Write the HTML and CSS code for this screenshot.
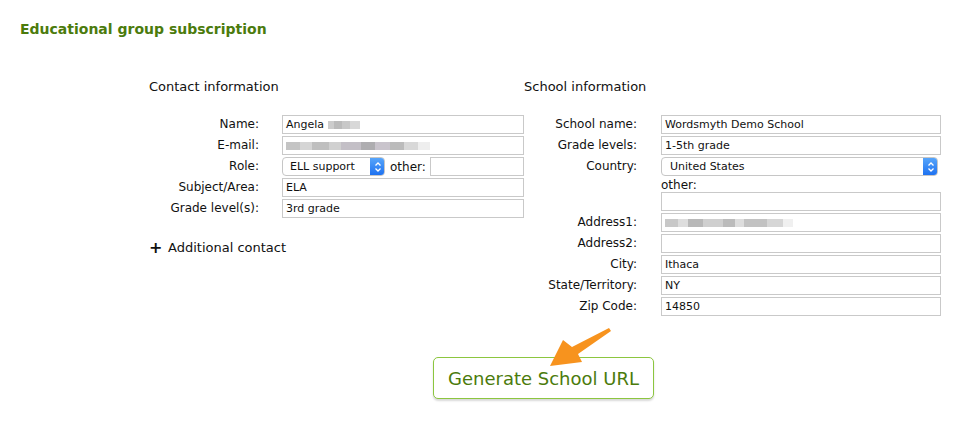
FILE: index.html
```html
<!DOCTYPE html>
<html>
<head>
<meta charset="utf-8">
<link rel="stylesheet" href="styles.css">
</head>
<body>
<div class="page">
  <h1 class="title">Educational group subscription</h1>
  <div class="columns">
    <section class="col col-contact">
      <h2 class="col-head">Contact information</h2>
      <div class="rows">
        <div class="row"><span class="lbl">Name:</span><div class="field">Angela <span class="blur blur-short"></span></div></div>
        <div class="row"><span class="lbl">E-mail:</span><div class="field"><span class="blur blur-long"></span></div></div>
        <div class="row"><span class="lbl">Role:</span>
          <div class="role-line">
            <div class="select select-role"><span class="sel-text">ELL support</span><span class="sel-btn"><svg width="8" height="12" viewBox="0 0 8 12"><path d="M1.5 4.5 L4 2 L6.5 4.5 M1.5 7.5 L4 10 L6.5 7.5" fill="none" stroke="#fff" stroke-width="1.3"/></svg></span></div>
            <span class="other-lbl">other:</span>
            <div class="field field-other"></div>
          </div>
        </div>
        <div class="row"><span class="lbl">Subject/Area:</span><div class="field">ELA</div></div>
        <div class="row"><span class="lbl">Grade level(s):</span><div class="field">3rd grade</div></div>
      </div>
      <div class="add-contact"><span class="plus">+</span>Additional contact</div>
    </section>
    <section class="col col-school">
      <h2 class="col-head">School information</h2>
      <div class="rows rows-school">
        <div class="row"><span class="lbl">School name:</span><div class="field">Wordsmyth Demo School</div></div>
        <div class="row"><span class="lbl">Grade levels:</span><div class="field">1-5th grade</div></div>
        <div class="row row-country"><span class="lbl">Country:</span>
          <div class="country-stack">
            <div class="select select-country"><span class="sel-text">United States</span><span class="sel-btn"><svg width="8" height="12" viewBox="0 0 8 12"><path d="M1.5 4.5 L4 2 L6.5 4.5 M1.5 7.5 L4 10 L6.5 7.5" fill="none" stroke="#fff" stroke-width="1.3"/></svg></span></div>
            <span class="other-under">other:</span>
            <div class="field"></div>
          </div>
        </div>
        <div class="row"><span class="lbl">Address1:</span><div class="field"><span class="blur blur-addr"></span></div></div>
        <div class="row"><span class="lbl">Address2:</span><div class="field"></div></div>
        <div class="row"><span class="lbl">City:</span><div class="field">Ithaca</div></div>
        <div class="row"><span class="lbl">State/Territory:</span><div class="field">NY</div></div>
        <div class="row"><span class="lbl">Zip Code:</span><div class="field">14850</div></div>
      </div>
    </section>
  </div>
  <div class="actions">
    <button class="gen-btn">Generate School URL</button>
    <svg class="arrow" width="70" height="45" viewBox="0 0 70 45">
      <polygon points="0,38 13,12 22,19 59,0 61,3 28,26 32,34" fill="#f7931e"/>
    </svg>
  </div>
</div>
</body>
</html>
```
FILE: styles.css
```css
* { box-sizing: border-box; }
html, body { margin: 0; padding: 0; background: #fff; }
body { font-family: "DejaVu Sans", Verdana, sans-serif; color: #111; width: 966px; height: 422px; overflow: hidden; }
.page { padding: 20px 0 0 20px; }
.title { margin: 0; font-size: 14px; font-weight: bold; color: #4b7b0c; line-height: 18px; }
.columns { display: flex; margin-top: 41px; padding-left: 129px; }
.col-head { margin: 0; font-size: 13px; font-weight: normal; line-height: 16px; height: 18px; }
.col-contact { width: 375px; }
.rows { display: flex; flex-direction: column; gap: 2px; margin-top: 18px; }
.row { display: flex; align-items: center; }
.lbl { width: 110px; text-align: right; font-size: 12px; line-height: 19px; flex: none; }
.field { width: 243px; height: 19px; border: 1px solid #c9c9c9; margin-left: 23px; font-size: 11px; line-height: 17px; padding-left: 3px; color: #111; white-space: nowrap; overflow: hidden; }
.role-line { display: flex; align-items: center; margin-left: 23px; }
.select { display: flex; align-items: center; height: 19px; border: 1px solid #c6c6c6; border-radius: 4px; background: #fff; font-size: 11px; overflow: hidden; }
.select-role { width: 103px; }
.sel-text { flex: 1; padding-left: 7px; line-height: 17px; }
.sel-btn { width: 15px; height: 19px; margin: -1px -1px -1px 0; background: linear-gradient(#5aa8fb, #1b6ff0); border-radius: 0 4px 4px 0; display: flex; align-items: center; justify-content: center; }
.other-lbl { font-size: 12px; margin-left: 5px; }
.field-other { width: 94px; margin-left: 4px; }
.add-contact { margin-top: 22px; font-size: 13px; line-height: 16px; display: flex; align-items: center; }
.plus { font-weight: bold; font-size: 16px; width: 19px; }
.col-school { width: 420px; }
.rows-school .lbl { width: 113px; }
.rows-school .field { width: 280px; margin-left: 24px; }
.row-country { align-items: flex-start; }
.country-stack { display: flex; flex-direction: column; margin-left: 24px; }
.country-stack .field { margin-left: 0; }
.select-country { width: 277px; }
.select-country .sel-text { padding-left: 8px; }
.other-under { font-size: 12px; line-height: 15px; margin-top: 2px; margin-bottom: -1px; }
.blur { display: inline-block; height: 8px; vertical-align: middle; filter: blur(0.6px); }
.blur-short { width: 32px; background: linear-gradient(90deg, #ccc 0 20%, #bbb 20% 45%, #c8c8c8 45% 70%, #d8d8d8 70% 100%); }
.blur-long { width: 144px; background: linear-gradient(90deg, #c4c4c4 0 10%, #d5d5d5 10% 18%, #bfbfbf 18% 30%, #d0d0d0 30% 38%, #c3bfc6 38% 52%, #aeadb0 52% 62%, #c9c4cc 62% 72%, #bbb 72% 82%, #d8d8d8 82% 92%, #eee 92% 100%); }
.blur-addr { width: 128px; background: linear-gradient(90deg, #c8c8c8 0 10%, #ddd 10% 18%, #b8b8b8 18% 30%, #cfcfcf 30% 45%, #bbb 45% 55%, #ddd 55% 62%, #c2c2c2 62% 80%, #d6d6d6 80% 92%, #f0f0f0 92% 100%); }
.actions { position: relative; margin-top: 41px; padding-left: 413px; }
.gen-btn { display: block; width: 221px; height: 42px; border: 1px solid #8cc63f; border-radius: 5px; background: #fff; color: #4b7b0c; font-family: "DejaVu Sans", Verdana, sans-serif; font-size: 18px; box-shadow: 0 2px 2px rgba(0,0,0,0.15); padding: 0; }
.arrow { position: absolute; left: 530px; top: -29px; }
```
